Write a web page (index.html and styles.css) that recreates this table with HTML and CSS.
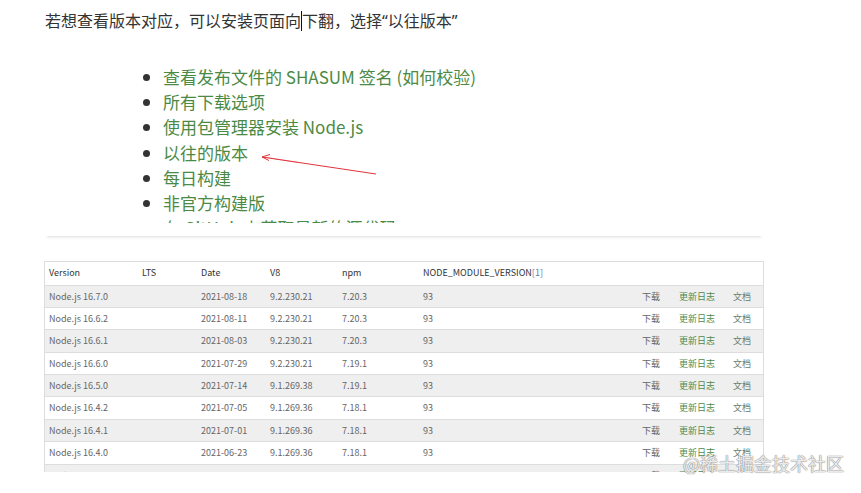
FILE: index.html
```html
<!DOCTYPE html>
<html lang="zh-CN">
<head>
<meta charset="utf-8">
<title>Node.js 版本</title>
<link rel="stylesheet" href="styles.css">
</head>
<body>
<p class="heading">若想查看版本对应，可以安装页面向<span class="caret"></span>下翻，选择“以往版本”</p>

<div class="shot">
  <div class="shot-clip">
    <ul class="links">
      <li>查看发布文件的 SHASUM 签名 (如何校验)</li>
      <li>所有下载选项</li>
      <li>使用包管理器安装 Node.js</li>
      <li>以往的版本</li>
      <li>每日构建</li>
      <li>非官方构建版</li>
      <li>在 GitHub 上获取最新的源代码</li>
    </ul>
  </div>
  <svg class="arrow" width="130" height="30" viewBox="0 0 130 30">
    <path d="M3 5 L117 22" stroke="#e2333a" stroke-width="1" fill="none"/>
    <path d="M11 2.5 L3 5 L10 8.5" stroke="#e2333a" stroke-width="1" fill="none"/>
    <path d="M6 5.2 L40 10.6" stroke="#e2333a" stroke-width="0.6" fill="none" opacity="0.6"/>
  </svg>
</div>

<div class="table-wrap">
  <div class="vtable">
    <div class="row head">
      <span>Version</span><span>LTS</span><span>Date</span><span>V8</span><span>npm</span><span>NODE_MODULE_VERSION<em class="ref">[1]</em></span><span></span><span></span><span></span>
    </div>
    <div class="row odd"><span>Node.js 16.7.0</span><span></span><span>2021-08-18</span><span>9.2.230.21</span><span>7.20.3</span><span>93</span><span class="dl">下载</span><span class="log">更新日志</span><span class="doc">文档</span></div>
    <div class="row"><span>Node.js 16.6.2</span><span></span><span>2021-08-11</span><span>9.2.230.21</span><span>7.20.3</span><span>93</span><span class="dl">下载</span><span class="log">更新日志</span><span class="doc">文档</span></div>
    <div class="row odd"><span>Node.js 16.6.1</span><span></span><span>2021-08-03</span><span>9.2.230.21</span><span>7.20.3</span><span>93</span><span class="dl">下载</span><span class="log">更新日志</span><span class="doc">文档</span></div>
    <div class="row"><span>Node.js 16.6.0</span><span></span><span>2021-07-29</span><span>9.2.230.21</span><span>7.19.1</span><span>93</span><span class="dl">下载</span><span class="log">更新日志</span><span class="doc">文档</span></div>
    <div class="row odd"><span>Node.js 16.5.0</span><span></span><span>2021-07-14</span><span>9.1.269.38</span><span>7.19.1</span><span>93</span><span class="dl">下载</span><span class="log">更新日志</span><span class="doc">文档</span></div>
    <div class="row"><span>Node.js 16.4.2</span><span></span><span>2021-07-05</span><span>9.1.269.36</span><span>7.18.1</span><span>93</span><span class="dl">下载</span><span class="log">更新日志</span><span class="doc">文档</span></div>
    <div class="row odd"><span>Node.js 16.4.1</span><span></span><span>2021-07-01</span><span>9.1.269.36</span><span>7.18.1</span><span>93</span><span class="dl">下载</span><span class="log">更新日志</span><span class="doc">文档</span></div>
    <div class="row"><span>Node.js 16.4.0</span><span></span><span>2021-06-23</span><span>9.1.269.36</span><span>7.18.1</span><span>93</span><span class="dl">下载</span><span class="log">更新日志</span><span class="doc">文档</span></div>
    <div class="row odd"><span>Node.js 16.3.0</span><span></span><span>2021-06-03</span><span>9.0.257.25</span><span>7.15.1</span><span>93</span><span class="dl">下载</span><span class="log">更新日志</span><span class="doc">文档</span></div>
  </div>
</div>

<div class="watermark">@稀土掘金技术社区</div>
</body>
</html>
```

FILE: styles.css
```css
html, body {
  margin: 0;
  padding: 0;
  background: #fff;
}
body {
  width: 861px;
  height: 493px;
  overflow: hidden;
  position: relative;
  font-family: "Noto Sans CJK SC", "Noto Sans", sans-serif;
}
.heading {
  margin: 0;
  padding: 11px 0 0 45px;
  font-family: "Noto Sans", "Noto Sans CJK SC", sans-serif;
  font-size: 16px;
  line-height: 20px;
  color: #333;
}
.caret {
  display: inline-block;
  width: 0;
  height: 20px;
  border-left: 1px solid #111;
  vertical-align: top;
}
.shot {
  position: relative;
  margin: 19px 0 0 45px;
  width: 718px;
  padding-bottom: 13px;
  box-shadow: 0 3px 3px -2px rgba(0, 0, 0, 0.14);
}
.shot-clip {
  height: 173px;
  overflow: hidden;
}
.links {
  margin: 0;
  padding: 14px 0 0 118px;
  list-style: disc;
  font-size: 17px;
  line-height: 25.2px;
  color: #4b8a45;
}
.links li::marker {
  color: #333;
}
.arrow {
  position: absolute;
  left: 214px;
  top: 102px;
}
.table-wrap {
  margin: 25px 0 0 44px;
  width: 720px;
  height: 211px;
  overflow: hidden;
}
.vtable {
  border: 1px solid #ddd;
  font-size: 9px;
  color: #666;
}
.row {
  display: grid;
  grid-template-columns: 93px 59px 69px 72px 81px 219px 37px 54px 34px;
  height: 21.4px;
  line-height: 21.4px;
  border-bottom: 1px solid #ddd;
  background: #fff;
}
.row > span {
  padding-left: 4px;
  white-space: nowrap;
}
.row.head {
  height: 22.5px;
  line-height: 22.5px;
  color: #333;
}
.row.odd {
  background: #efefef;
}
.ref {
  font-style: normal;
  color: #5a7fae;
}
.dl { color: #666; }
.log { color: #4f8a48; }
.doc { color: #6c7c6a; }
.watermark {
  position: absolute;
  left: 683px;
  top: 452px;
  font-size: 18px;
  line-height: 22px;
  color: rgba(250, 250, 250, 0.9);
  text-shadow: 0 0 1px #7a7a7a, 0 0 1px #7a7a7a;
}
```
